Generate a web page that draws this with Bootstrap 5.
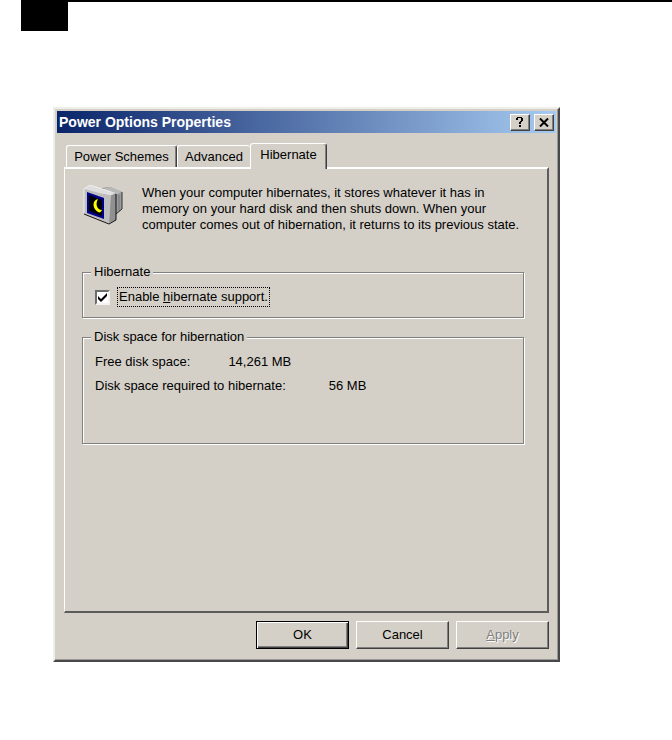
<!DOCTYPE html>
<html lang="en">
<head>
<meta charset="utf-8">
<meta name="viewport" content="width=device-width, initial-scale=1">
<title>Power Options Properties</title>
<link href="https://cdn.jsdelivr.net/npm/bootstrap@5.3.0/dist/css/bootstrap.min.css" rel="stylesheet">
<style>
  :root { --face: #d4d0c8; --shade: #808080; --dark: #404040; }
  body { font-family: "Liberation Sans", Arial, sans-serif; font-size: 13px; line-height: 16px; color: #000; background: #fff; }
  .page-rule { border-top: 2px solid #000; margin-left: 21px; }
  .page-block { width: 47px; height: 29px; background: #000; }
  .dialog-area { padding: 76px 112px 78px 53px; }
  .dialog { background: var(--face); padding: 2px; border: 2px solid; border-color: #f0eee9 #48484c #48484c #f0eee9; box-shadow: inset -1px -1px 0 #9a9894; }
  .dialog-title { height: 22px; padding: 0 2px; background: linear-gradient(90deg, #0a246a, #a6caf0); }
  .dialog-title h1 { font-size: 14px; line-height: 22px; font-weight: 700; color: #fff; }
  .bevel { background: var(--face); border: 1px solid; border-color: #fff var(--dark) var(--dark) #fff; box-shadow: inset -1px -1px 0 var(--shade); color: #000; border-radius: 0; }
  .caption-btn { width: 20px; height: 17px; padding: 0; }
  .caption-btn svg { display: block; margin: auto; }
  .dialog-body { padding: 10px 7px 9px; }
  .tab-strip { padding-left: 2px; }
  .tab-btn { height: 22px; padding: 0 6px; background: var(--face); border: 1px solid; border-color: #fff var(--dark) transparent #fff; border-bottom: 0; border-radius: 3px 3px 0 0; box-shadow: inset -1px 0 0 var(--shade); line-height: 22px; color: #000; white-space: nowrap; }
  .tab-btn.wide-tab { width: 111px; }
  .tab-btn.mid-tab { width: 73px; border-right: 0; box-shadow: none; }
  .tab-btn.current { width: 77px; height: 26px; padding: 0 7px 3px; margin-bottom: -2px; position: relative; }
  .sheet { min-height: 446px; padding: 16px 22px 16px 17px; border: 2px solid; border-color: #fff #5c5c5c #5c5c5c #fff; border-left-width: 1px; }
  .intro { gap: 18px; }
  .etched { border: 1px solid var(--shade); box-shadow: inset 1px 1px 0 #fff, 1px 1px 0 #fff; padding: 0 12px; margin-right: 1px; }
  .etched legend { float: none; width: auto; font-size: 13px; line-height: 16px; padding: 0 3px; margin: 0 0 0 -4px; background: var(--face); }
  .first-group { margin-top: 31px; min-height: 54px; }
  .second-group { margin-top: 11px; min-height: 115px; }
  .tick { appearance: none; width: 15px; height: 15px; margin: 0; border: 2px solid; border-color: #6c6c6c #f4f2ee #f4f2ee #6c6c6c; background: #fff url("data:image/svg+xml,%3Csvg xmlns='http://www.w3.org/2000/svg' viewBox='0 0 11 11'%3E%3Cpath d='M1 4v3l3 3 6-6V1L4 7z'/%3E%3C/svg%3E") center/11px no-repeat; }
  .tick:not(:checked) { background-image: none; }
  .focus-label { outline: 1px dotted #000; padding: 1px; line-height: 16px; }
  .facts { margin-top: 9px; }
  .facts-row { margin-bottom: 8px; }
  .value-near { margin-left: 38px; }
  .value-far { margin-left: 43px; }
  .actions { gap: 7px; padding-top: 8px; }
  .cmd { width: 93px; height: 28px; padding: 0; font-size: 13px; }
  .cmd-default { border-color: #000; box-shadow: inset 1px 1px 0 #fff, inset -1px -1px 0 var(--dark), inset -2px -2px 0 var(--shade); }
  .cmd:disabled { color: var(--shade); text-shadow: 1px 1px 0 #fff; }
</style>
</head>
<body>
<header class="page-rule"><div class="page-block"></div></header>
<main class="dialog-area">
  <section class="dialog" aria-labelledby="dlg-title">
    <div class="dialog-title d-flex align-items-center">
      <h1 id="dlg-title" class="m-0 me-auto">Power Options Properties</h1>
      <button type="button" class="bevel caption-btn" aria-label="Help"><svg width="10" height="11" viewBox="0 0 10 11" aria-hidden="true" shape-rendering="crispEdges"><path d="M1 1h1V0h5v1h1v3H7v1H6v2H4V5h1V4h1V1H3v2H1zM4 8h2v2H4z"/></svg></button>
      <button type="button" class="bevel caption-btn ms-1" aria-label="Close"><svg width="10" height="9" viewBox="0 0 10 9" aria-hidden="true"><path d="M1 .5l8 8M9 .5l-8 8" stroke="#000" stroke-width="2"/></svg></button>
    </div>
    <div class="dialog-body">
      <div class="tab-strip d-flex align-items-end" role="tablist">
        <button type="button" class="tab-btn wide-tab" role="tab" aria-selected="false">Power Schemes</button>
        <button type="button" class="tab-btn mid-tab" role="tab" aria-selected="false">Advanced</button>
        <button type="button" class="tab-btn current" role="tab" aria-selected="true">Hibernate</button>
      </div>
      <div class="sheet" role="tabpanel">
        <div class="intro d-flex">
          <svg class="flex-shrink-0" width="42" height="42" viewBox="0 0 42 42" aria-hidden="true">
            <path d="M20 3l8-1 12 5v17l-6 5-10-4z" fill="#8e8e8e"/>
            <path d="M20 4l8-2 12 5-6 3z" fill="#b8b8b8"/>
            <path d="M34 11l6-4v17l-6 5z" fill="#9c9c9c"/>
            <path d="M37 10v16" stroke="#777"/>
            <path d="M40 7v17l-6 5" fill="none" stroke="#333"/>
            <path d="M2 4l6-4 26 8-5 3z" fill="#dedede"/>
            <path d="M28 11l6-3v27l-7 3z" fill="#909090"/>
            <path d="M2 4l27 7-2 27L2 28z" fill="#bebebe"/>
            <path d="M2 28V4l6-4 21 7" fill="none" stroke="#eee"/>
            <path d="M5 7l17 6v21L5 28z" fill="#00008c"/>
            <path d="M7 10l13 5v16L7 26z" fill="#000"/>
            <path d="M16 14c-6 1-6 10 0 13 2 1 3 0 4-2-5 0-7-6-4-11z" fill="#ff0"/>
            <path d="M2 29l25 10 7-4V9" fill="none" stroke="#111"/>
          </svg>
          <p class="m-0">When your computer hibernates, it stores whatever it has in<br>memory on your hard disk and then shuts down. When your<br>computer comes out of hibernation, it returns to its previous state.</p>
        </div>
        <fieldset class="etched first-group">
          <legend>Hibernate</legend>
          <div class="d-flex align-items-center gap-2 mt-2">
            <input class="tick" type="checkbox" id="enable" checked>
            <label class="focus-label" for="enable">Enable <u>h</u>ibernate support.</label>
          </div>
        </fieldset>
        <fieldset class="etched second-group">
          <legend>Disk space for hibernation</legend>
          <div class="facts">
            <div class="facts-row d-flex"><span>Free disk space:</span><span class="value-near">14,261 MB</span></div>
            <div class="facts-row d-flex"><span>Disk space required to hibernate:</span><span class="value-far">56 MB</span></div>
          </div>
        </fieldset>
      </div>
      <div class="actions d-flex justify-content-end">
        <button type="button" class="bevel cmd cmd-default">OK</button>
        <button type="button" class="bevel cmd">Cancel</button>
        <button type="button" class="bevel cmd" disabled><u>A</u>pply</button>
      </div>
    </div>
  </section>
</main>
<script src="https://cdn.jsdelivr.net/npm/bootstrap@5.3.0/dist/js/bootstrap.bundle.min.js"></script>
</body>
</html>
